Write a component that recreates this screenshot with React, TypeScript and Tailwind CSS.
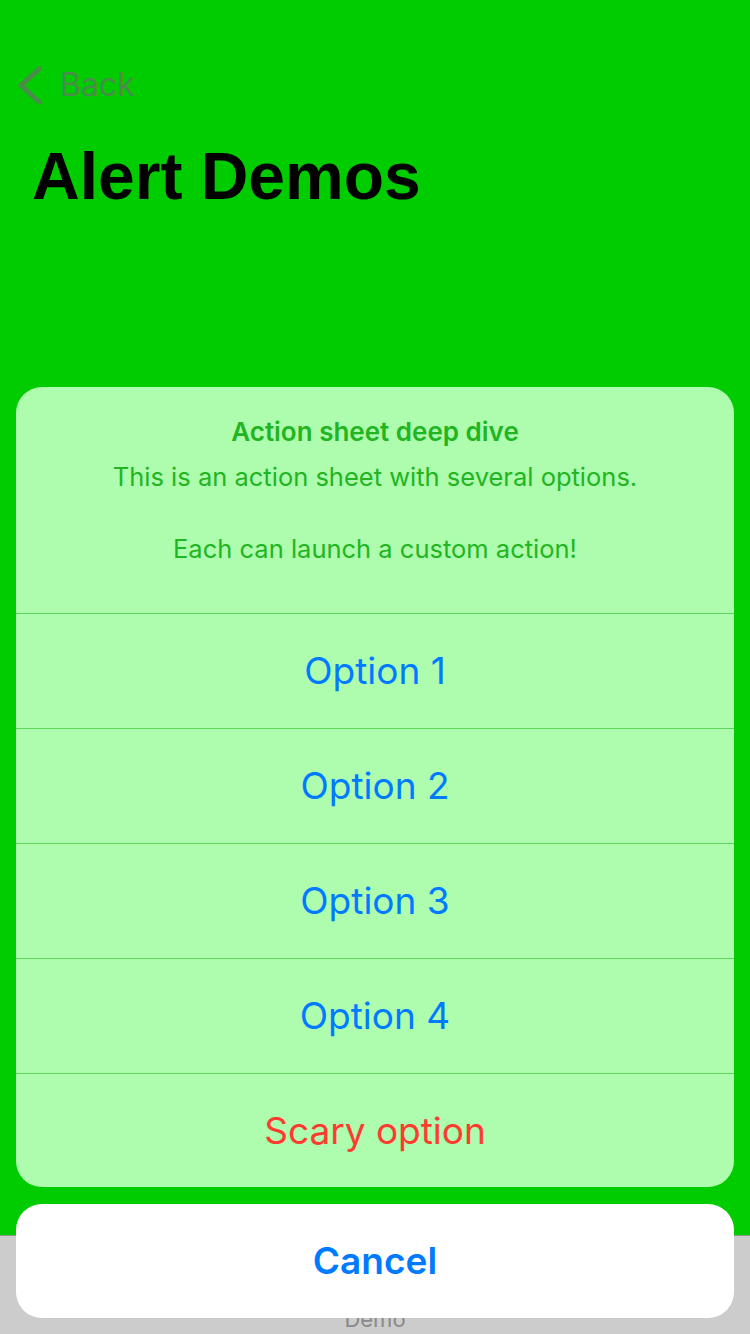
const options = ["Option 1", "Option 2", "Option 3", "Option 4"];

const App = () => {
  return (
    <div
      className="relative flex h-[1334px] w-[750px] flex-col overflow-hidden"
      style={{ fontFamily: "Inter, 'Liberation Sans', sans-serif" }}
    >
      {/* screen behind the sheet */}
      <div className="flex-1 bg-[#00cc00]">
        <div className="flex h-[97px] items-center pt-[73px] pl-[14px]">
          <svg width="30" height="40" viewBox="0 0 30 40" className="shrink-0">
            <path
              d="M25 4 L7 20.5 L25 37"
              fill="none"
              stroke="#4a8c4a"
              strokeWidth="5"
              strokeLinecap="round"
              strokeLinejoin="round"
            />
          </svg>
          <span className="ml-[16px] text-[32px] leading-none text-[#4a8c4a]">Back</span>
        </div>
        <h1
          className="mt-[46px] pl-[32px] text-[66px] leading-none font-bold text-black"
          style={{ fontFamily: "'Liberation Sans', Arial, sans-serif" }}
        >
          Alert Demos
        </h1>
      </div>
      <div className="flex h-[99px] justify-center border-t border-[#8a9a8a] bg-[#cccccc] pt-[72px]">
        <span className="text-[22px] leading-none text-[#8a8a8a]">Demo</span>
      </div>

      {/* action sheet overlay */}
      <div className="absolute right-[16px] bottom-[16px] left-[16px] flex flex-col gap-[17px]">
        <div className="overflow-hidden rounded-[26px] bg-[#aefcae]">
          <div className="flex h-[226px] flex-col items-center pt-[29px] text-center text-[#22b522]">
            <div className="text-[26px] leading-[32px] font-semibold">Action sheet deep dive</div>
            <div className="mt-[11px] text-[25.5px] leading-[36px]">
              This is an action sheet with several options.
            </div>
            <div className="mt-[36px] text-[25.5px] leading-[36px]">Each can launch a custom action!</div>
          </div>
          {options.map((o) => (
            <div
              key={o}
              className="flex h-[115px] items-center justify-center border-t border-[#5cd65c] text-[37px] text-[#007aff]"
            >
              {o}
            </div>
          ))}
          <div className="flex h-[114px] items-center justify-center border-t border-[#5cd65c] text-[37px] text-[#ff3b30]">
            Scary option
          </div>
        </div>
        <div className="flex h-[114px] items-center justify-center rounded-[26px] bg-white text-[37px] font-semibold text-[#007aff]">
          Cancel
        </div>
      </div>
    </div>
  );
};

export default App;
